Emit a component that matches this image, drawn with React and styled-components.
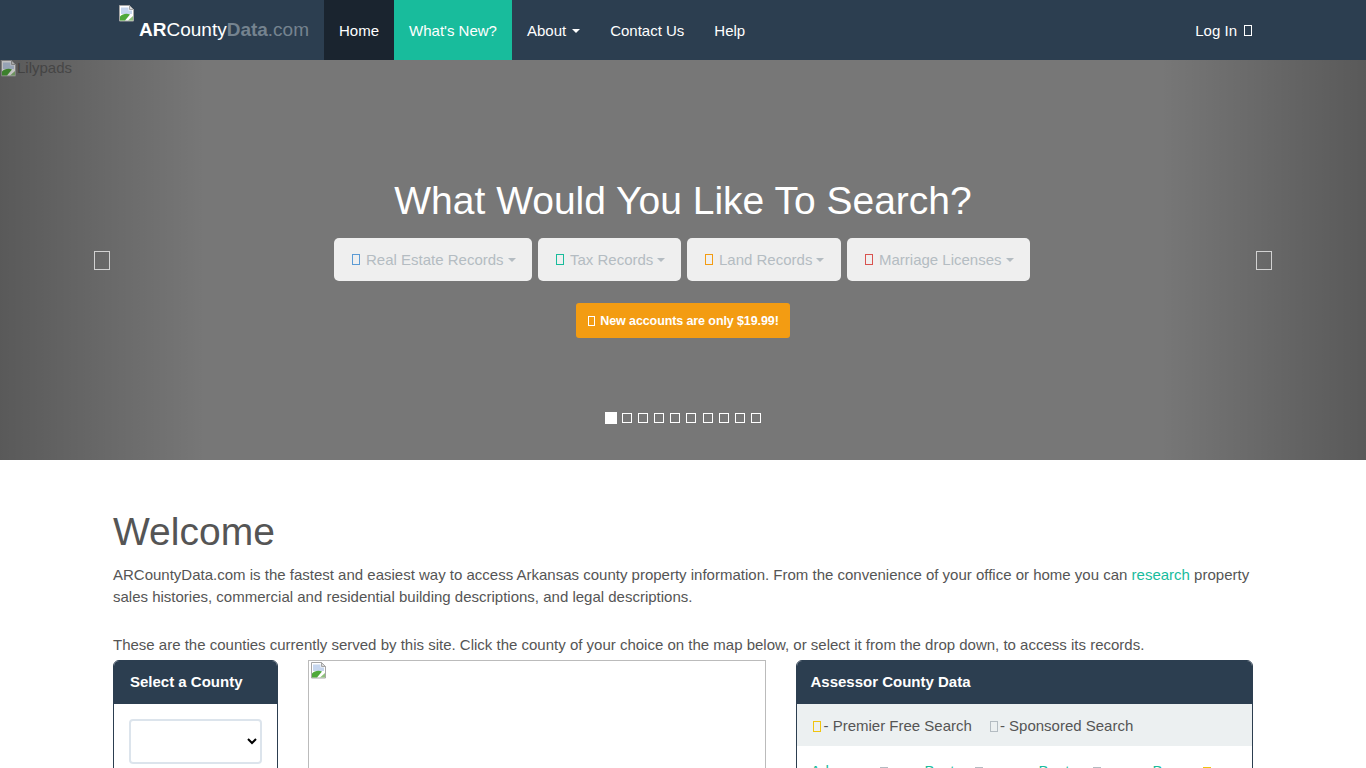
import React from 'react';
import styled, { createGlobalStyle } from 'styled-components';

const GlobalStyle = createGlobalStyle`
  html, body {
    margin: 0;
    padding: 0;
    background: #fff;
  }
  body {
    color: #555;
    font-family: "Liberation Sans", Arial, sans-serif;
    font-size: 15px;
    line-height: 22px;
  }
  * {
    box-sizing: border-box;
  }
`;

const Navbar = styled.nav`
  align-items: stretch;
  background: #2c3e50;
  display: flex;
  height: 60px;
  padding: 0 114px 0 118px;
`;

const Brand = styled.a`
  color: #fff;
  display: flex;
  font-size: 19px;
  padding: 5px 15px 0 0;
`;

const BrandText = styled.span`
  line-height: 20px;
  margin: 15px 0 0 4px;
  white-space: nowrap;
  b {
    font-weight: 700;
  }
  i {
    color: #75838f;
    font-style: normal;
  }
`;

const NavItem = styled.a`
  align-items: center;
  background: ${props => props.$bg || 'transparent'};
  color: #fff;
  display: flex;
  gap: 4px;
  padding: 1px 15px 0;
`;

const Caret = styled.span`
  border-left: 4px solid transparent;
  border-right: 4px solid transparent;
  border-top: 4px solid currentColor;
  display: inline-block;
  margin-left: 2px;
`;

const Tofu = styled.span`
  border: 1px solid ${props => props.$color || 'currentColor'};
  display: inline-block;
  flex: none;
  height: ${props => props.$h || 11}px;
  margin-right: ${props => props.$mr || 0}px;
  width: ${props => props.$w || 8}px;
`;

const Spacer = styled.div`
  flex: 1;
`;

const LogIn = styled(NavItem)`
  gap: 7px;
  padding: 1px 0 0;
`;

const Carousel = styled.section`
  background: #777;
  height: 400px;
  position: relative;
`;

const MissingImage = styled.div`
  align-items: flex-start;
  color: #555;
  display: flex;
  line-height: 16px;
`;

const Control = styled.a`
  align-items: center;
  background: linear-gradient(
    ${props => (props.$side === 'left' ? 'to right' : 'to left')},
    rgba(0, 0, 0, 0.25),
    rgba(0, 0, 0, 0)
  );
  bottom: 0;
  color: #fff;
  display: flex;
  justify-content: ${props => (props.$side === 'left' ? 'flex-start' : 'flex-end')};
  padding: 0 94px;
  position: absolute;
  top: 0;
  width: 15%;
  ${props => props.$side}: 0;
  span {
    opacity: 0.7;
  }
`;

const Caption = styled.div`
  align-items: center;
  color: #fff;
  display: flex;
  flex-direction: column;
  left: 0;
  position: absolute;
  right: 0;
  top: 114px;
`;

const Headline = styled.h2`
  font-size: 39px;
  font-weight: 400;
  line-height: 54px;
  margin: 0 0 10px;
`;

const ButtonRow = styled.div`
  display: flex;
  gap: 6px;
  margin-left: -2px;
`;

const SearchButton = styled.button`
  align-items: center;
  background: #efefef;
  border: 0;
  border-radius: 5px;
  color: #b4bcc2;
  display: flex;
  font: inherit;
  gap: 6px;
  height: 43px;
  padding: 0 0 0 18px;
  white-space: nowrap;
  width: ${props => props.$width}px;
  ${Caret} {
    margin-left: -2px;
  }
`;

const PromoButton = styled.a`
  align-items: center;
  background: #f39c12;
  border-radius: 3px;
  color: #fff;
  display: flex;
  font-size: 12.5px;
  font-weight: 700;
  gap: 5px;
  height: 35px;
  letter-spacing: -0.1px;
  margin-top: 22px;
  padding: 0 11px 0 12px;
`;

const Indicators = styled.ol`
  align-items: center;
  bottom: 36px;
  display: flex;
  gap: 6.2px;
  justify-content: center;
  left: 0;
  list-style: none;
  margin: 0;
  padding: 0;
  position: absolute;
  right: 0;
`;

const Dot = styled.li`
  background: ${props => (props.$active ? '#fff' : 'transparent')};
  border: 1px solid #fff;
  height: ${props => (props.$active ? 12 : 10)}px;
  margin-right: ${props => (props.$active ? -1.25 : 0)}px;
  width: ${props => (props.$active ? 12 : 10)}px;
`;

const Container = styled.main`
  margin: 0 auto;
  padding: 0 15px;
  width: 1170px;
`;

const Title = styled.h1`
  color: #555;
  font-size: 39px;
  font-weight: 400;
  line-height: 43px;
  margin: 50px 0 11px;
`;

const Text = styled.p`
  margin: ${props => props.$mt || 0}px 0 0;
`;

const Link = styled.a`
  color: #18bc9c;
`;

const Columns = styled.div`
  align-items: flex-start;
  display: grid;
  gap: 30px;
  grid-template-columns: 165px 457.5px 1fr;
  margin-top: 4px;
`;

const Panel = styled.div`
  border: 1px solid #2c3e50;
  border-radius: 6px;
  overflow: hidden;
`;

const PanelHeading = styled.div`
  align-items: center;
  background: #2c3e50;
  color: #fff;
  display: flex;
  font-weight: 700;
  height: 43px;
  padding: 0 ${props => props.$pad || 16}px 2px;
`;

const PanelBody = styled.div`
  padding: 15px;
`;

const CountySelect = styled.select`
  background: #fff;
  border: 2px solid #dce4ec;
  border-radius: 4px;
  display: block;
  font: inherit;
  height: 45px;
  width: 100%;
`;

const MapFrame = styled.div`
  border: 1px solid #bbb;
  height: 380px;
  padding: 1px;
`;

const Legend = styled.div`
  align-items: center;
  background: #ecf0f1;
  display: flex;
  height: 42px;
  padding: 2px 16px 0;
`;

const LegendItem = styled.span`
  align-items: center;
  display: flex;
  margin-right: 18px;
  white-space: nowrap;
`;

const CountyGrid = styled.div`
  display: grid;
  grid-template-columns: repeat(4, 114px);
  padding: 14px 14px 12px;
`;

const County = styled.div`
  align-items: center;
  display: flex;
  gap: 7px;
  ${Tofu} {
    margin-top: 3px;
  }
`;

const BrokenImage = () => (
  <svg width="17" height="17" viewBox="0 0 17 17">
    <path d="M1.500 .5h10l4 4v11.500h-14z" fill="#fff" stroke="#a6a6a6" />
    <path d="M11.500 .5v4h4z" fill="#dcdcdc" stroke="#a6a6a6" />
    <path d="M3 2.500h7.500v3h3.500v3.500H3z" fill="#c6d6ee" />
    <path d="M2 15.500v-4c2.500-3 7-3.500 10-2l-5 6z" fill="#4fa93a" />
    <path d="M15 11l-5 4.500h5z" fill="#8fc07c" />
  </svg>
);

const searches = [
  { label: 'Real Estate Records', color: '#5b9bd5', width: 198 },
  { label: 'Tax Records', color: '#18bc9c', width: 143 },
  { label: 'Land Records', color: '#f39c12', width: 154 },
  { label: 'Marriage Licenses', color: '#d9534f', width: 183 },
];

const counties = [
  { name: 'Arkansas', color: '#b4bcc2' },
  { name: 'Baxter', color: '#b4bcc2' },
  { name: 'Benton', color: '#b4bcc2' },
  { name: 'Boone', color: '#f1c40f' },
];

const App = () => {
  return (
    <>
      <GlobalStyle />
      <Navbar>
        <Brand>
          <BrokenImage />
          <BrandText>
            <b>AR</b>County<i><b>Data</b>.com</i>
          </BrandText>
        </Brand>
        <NavItem $bg="#1a242f">Home</NavItem>
        <NavItem $bg="#18bc9c">What's New?</NavItem>
        <NavItem>About <Caret /></NavItem>
        <NavItem>Contact Us</NavItem>
        <NavItem>Help</NavItem>
        <Spacer />
        <LogIn>Log In <Tofu /></LogIn>
      </Navbar>
      <Carousel>
        <MissingImage><BrokenImage />Lilypads</MissingImage>
        <Control $side="left"><Tofu $w={16} $h={19} /></Control>
        <Control $side="right"><Tofu $w={16} $h={19} /></Control>
        <Caption>
          <Headline>What Would You Like To Search?</Headline>
          <ButtonRow>
            {searches.map(item => (
              <SearchButton key={item.label} $width={item.width}>
                <Tofu $color={item.color} />
                <span>{item.label}</span>
                <Caret />
              </SearchButton>
            ))}
          </ButtonRow>
          <PromoButton><Tofu $w={7} $h={10} /> New accounts are only $19.99!</PromoButton>
        </Caption>
        <Indicators>
          {Array.from({ length: 10 }, (_, i) => <Dot key={i} $active={i === 0} />)}
        </Indicators>
      </Carousel>
      <Container>
        <Title>Welcome</Title>
        <Text>
          ARCountyData.com is the fastest and easiest way to access Arkansas county property information. From the convenience of your office or home you can <Link>research</Link> property sales histories, commercial and residential building descriptions, and legal descriptions.
        </Text>
        <Text $mt={26}>
          These are the counties currently served by this site. Click the county of your choice on the map below, or select it from the drop down, to access its records.
        </Text>
        <Columns>
          <Panel>
            <PanelHeading>Select a County</PanelHeading>
            <PanelBody><CountySelect /></PanelBody>
          </Panel>
          <MapFrame><BrokenImage /></MapFrame>
          <Panel>
            <PanelHeading $pad={14}>Assessor County Data</PanelHeading>
            <Legend>
              <LegendItem><Tofu $color="#f1c40f" $mr={3} />- Premier Free Search</LegendItem>
              <LegendItem><Tofu $color="#b4bcc2" $mr={2} />- Sponsored Search</LegendItem>
            </Legend>
            <CountyGrid>
              {counties.map(county => (
                <County key={county.name}>
                  <Link>{county.name}</Link>
                  <Tofu $color={county.color} />
                </County>
              ))}
            </CountyGrid>
          </Panel>
        </Columns>
      </Container>
    </>
  );
};

export default App;
